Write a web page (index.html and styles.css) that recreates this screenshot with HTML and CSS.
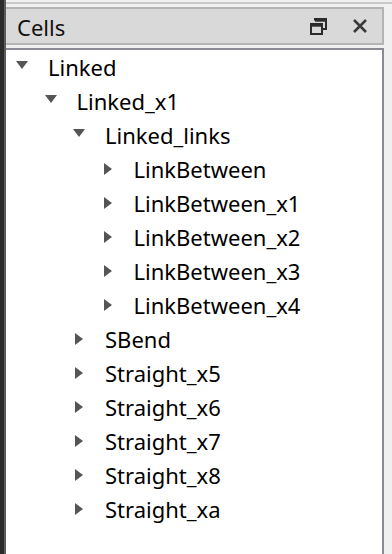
FILE: index.html
```html
<!DOCTYPE html>
<html>
<head>
<meta charset="utf-8">
<link rel="stylesheet" href="styles.css">
</head>
<body>
<div class="app">
  <div class="edge"></div>
  <div class="dock">
    <div class="title">
      <span class="title-text">Cells</span>
      <span class="tools">
        <svg class="ico" width="17" height="17" viewBox="0 0 17 17"><path d="M5 2.5V1h11v10h-4" fill="none" stroke="#2b2b2b" stroke-width="2"/><path d="M5 2.2h11" stroke="#2b2b2b" stroke-width="3"/><path d="M1 6h11v10H1z" fill="none" stroke="#2b2b2b" stroke-width="2"/><path d="M1 7.2h11" stroke="#2b2b2b" stroke-width="3"/></svg>
        <svg class="ico" width="16" height="16" viewBox="0 0 16 16"><path d="M2 2L14 14M14 2L2 14" stroke="#3a3a3a" stroke-width="2.6"/></svg>
      </span>
    </div>
    <div class="tree">
      <div class="row l0"><span class="tw down"></span>Linked</div>
      <div class="row l1"><span class="tw down"></span>Linked_x1</div>
      <div class="row l2"><span class="tw down"></span>Linked_links</div>
      <div class="row l3"><span class="tw right"></span>LinkBetween</div>
      <div class="row l3"><span class="tw right"></span>LinkBetween_x1</div>
      <div class="row l3"><span class="tw right"></span>LinkBetween_x2</div>
      <div class="row l3"><span class="tw right"></span>LinkBetween_x3</div>
      <div class="row l3"><span class="tw right"></span>LinkBetween_x4</div>
      <div class="row l2"><span class="tw right"></span>SBend</div>
      <div class="row l2"><span class="tw right"></span>Straight_x5</div>
      <div class="row l2"><span class="tw right"></span>Straight_x6</div>
      <div class="row l2"><span class="tw right"></span>Straight_x7</div>
      <div class="row l2"><span class="tw right"></span>Straight_x8</div>
      <div class="row l2"><span class="tw right"></span>Straight_xa</div>
    </div>
  </div>
</div>
</body>
</html>
```

FILE: styles.css
```css
html, body {
  margin: 0;
  padding: 0;
  width: 392px;
  height: 554px;
  overflow: hidden;
  background: #f0f0f0;
  font-family: "Noto Sans", "Open Sans", sans-serif;
}
.app {
  display: flex;
  height: 554px;
}
.edge {
  width: 4px;
  background: #2b2b2b;
  border-right: 2px solid #5c5c5c;
  flex: none;
}
.dock {
  flex: 1;
  display: flex;
  flex-direction: column;
  padding: 0 8px 0 0;
  border-top: 2px solid #c8c8c8;
  margin-top: 2px;
}
.title {
  margin-top: 3px;
  height: 34px;
  background: #d9d9d9;
  border: 2px solid #b4b4b4;
  border-left: 0;
  display: flex;
  align-items: center;
  padding-left: 11px;
  padding-right: 14px;
}
.title-text {
  font-size: 22px;
  color: #111;
  flex: 1;
  margin-top: 1px;
}
.tools {
  display: flex;
  gap: 25px;
  align-items: center;
}
.tree {
  margin-top: 3px;
  flex: 1;
  background: #fff;
  border-top: 2px solid #8a8a95;
  border-right: 2px solid #8a8a95;
  padding-top: 0;
}
.row {
  height: 34px;
  display: flex;
  align-items: center;
  font-size: 22px;
  color: #000;
}
.tw {
  width: 32px;
  height: 12px;
  position: relative;
  flex: none;
}
.tw::before {
  content: "";
  position: absolute;
  width: 0;
  height: 0;
}
.down::before {
  left: 0;
  top: 0;
  border-left: 6px solid transparent;
  border-right: 6px solid transparent;
  border-top: 8px solid #555;
}
.right::before {
  left: 2px;
  top: 0;
  border-top: 6px solid transparent;
  border-bottom: 6px solid transparent;
  border-left: 8px solid #555;
}
.l0 { padding-left: 10px; }
.l1 { padding-left: 38.5px; }
.l2 { padding-left: 67px; }
.l3 { padding-left: 95.5px; }
```
